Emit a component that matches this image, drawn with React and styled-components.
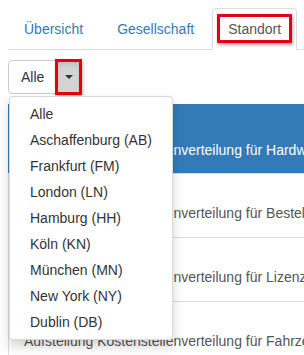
import styled, { createGlobalStyle } from "styled-components";

const GlobalStyle = createGlobalStyle`
  html, body {
    margin: 0;
    overflow: hidden;
    background: #fff;
  }
  body {
    font-family: "Liberation Sans", Arial, sans-serif;
    font-size: 14px;
    line-height: 20px;
    color: #333;
  }
  * {
    box-sizing: border-box;
  }
`;

const tabs = ["Übersicht", "Gesellschaft", "Standort"];

const locations = [
  "Alle",
  "Aschaffenburg (AB)",
  "Frankfurt (FM)",
  "London (LN)",
  "Hamburg (HH)",
  "Köln (KN)",
  "München (MN)",
  "New York (NY)",
  "Dublin (DB)",
];

const reports = [
  { id: "KST 01", topic: "Hardware", active: true },
  { id: "KST 02", topic: "Bestellungen" },
  { id: "KST 03", topic: "Lizenzen" },
  { id: "KST 04", topic: "Fahrzeuge" },
];

export default function App() {
  return (
    <Page>
      <GlobalStyle />
      <Tabs>
        {tabs.map((tab) => (
          <Tab key={tab}>
            <TabLink $active={tab === "Standort"}>{tab}</TabLink>
          </Tab>
        ))}
      </Tabs>

      <Content>
        <BtnGroup>
          <Button>Alle</Button>
          <Toggle>
            <Caret />
          </Toggle>
          <Menu>
            {locations.map((loc) => (
              <MenuItem key={loc}>{loc}</MenuItem>
            ))}
          </Menu>
        </BtnGroup>

        <List>
          {reports.map((r) => (
            <Row key={r.id} $active={r.active}>
              <RowTitle>{r.id}</RowTitle>
              <RowText>
                Aufstellung Kostenstellenverteilung für {r.topic} am Standort
              </RowText>
            </Row>
          ))}
        </List>
      </Content>
    </Page>
  );
}

const Page = styled.div`
  width: 640px;
  padding: 8px;
`;

const Tabs = styled.ul`
  display: flex;
  margin: 0;
  padding: 0;
  list-style: none;
  border-bottom: 1px solid #ddd;
`;

const Tab = styled.li`
  margin-right: 2px;
  margin-bottom: -1px;
`;

const TabLink = styled.a`
  position: relative;
  display: block;
  padding: 10px 15px;
  line-height: 20px;
  border: 1px solid transparent;
  border-radius: 4px 4px 0 0;
  color: #337ab7;
  cursor: pointer;

  ${({ $active }) =>
    $active &&
    `
    color: #555;
    background: #fff;
    border-color: #ddd #ddd transparent;

    &::after {
      content: "";
      position: absolute;
      top: 5px;
      left: 4px;
      right: 4px;
      bottom: 6px;
      border: 3px solid #e4000f;
      box-shadow: 1px 2px 3px rgba(0, 0, 0, 0.35);
    }
  `}
`;

const Content = styled.div`
  padding-top: 10px;
`;

const BtnGroup = styled.div`
  position: relative;
  display: inline-flex;
`;

const Button = styled.button`
  font: inherit;
  padding: 6px 12px;
  line-height: 20px;
  color: #333;
  background: #fff;
  border: 1px solid #ccc;
  border-radius: 4px 0 0 4px;
`;

const Toggle = styled.button`
  position: relative;
  display: flex;
  align-items: center;
  margin-left: -1px;
  padding: 6px 8px;
  background: #d4d4d4;
  border: 1px solid #adadad;
  border-radius: 0 4px 4px 0;
  box-shadow: inset 0 3px 5px rgba(0, 0, 0, 0.125);

  &::after {
    content: "";
    position: absolute;
    top: -2px;
    left: -2px;
    right: -1px;
    bottom: -2px;
    border: 3px solid #e4000f;
    box-shadow: 1px 2px 3px rgba(0, 0, 0, 0.3);
  }
`;

const Caret = styled.span`
  width: 0;
  height: 0;
  border-top: 4px solid #333;
  border-left: 4px solid transparent;
  border-right: 4px solid transparent;
`;

const Menu = styled.ul`
  position: absolute;
  top: 100%;
  left: 1px;
  z-index: 10;
  min-width: 160px;
  margin: 2px 0 0;
  padding: 4px 0;
  list-style: none;
  background: #fff;
  border: 1px solid rgba(0, 0, 0, 0.15);
  border-radius: 4px;
  box-shadow: 0 6px 12px rgba(0, 0, 0, 0.175);
`;

const MenuItem = styled.li`
  padding: 3px 20px;
  line-height: 20px;
  color: #333;
  white-space: nowrap;
`;

const List = styled.div`
  margin-top: 10px;
  border-left: 1px solid #ddd;
`;

const Row = styled.div`
  padding: ${({ $active }) => ($active ? "13px 15px 13px" : "7px 15px 14px")};
  border-top: 1px solid ${({ $active }) => ($active ? "#337ab7" : "#ddd")};
  margin-left: -1px;
  border-left: 1px solid ${({ $active }) => ($active ? "#337ab7" : "#ddd")};
  background: ${({ $active }) => ($active ? "#337ab7" : "#fff")};
  color: ${({ $active }) => ($active ? "#fff" : "#555")};
`;

const RowTitle = styled.div`
  font-weight: bold;
  line-height: 22px;
`;

const RowText = styled.div`
  line-height: 20px;
  white-space: nowrap;
`;
